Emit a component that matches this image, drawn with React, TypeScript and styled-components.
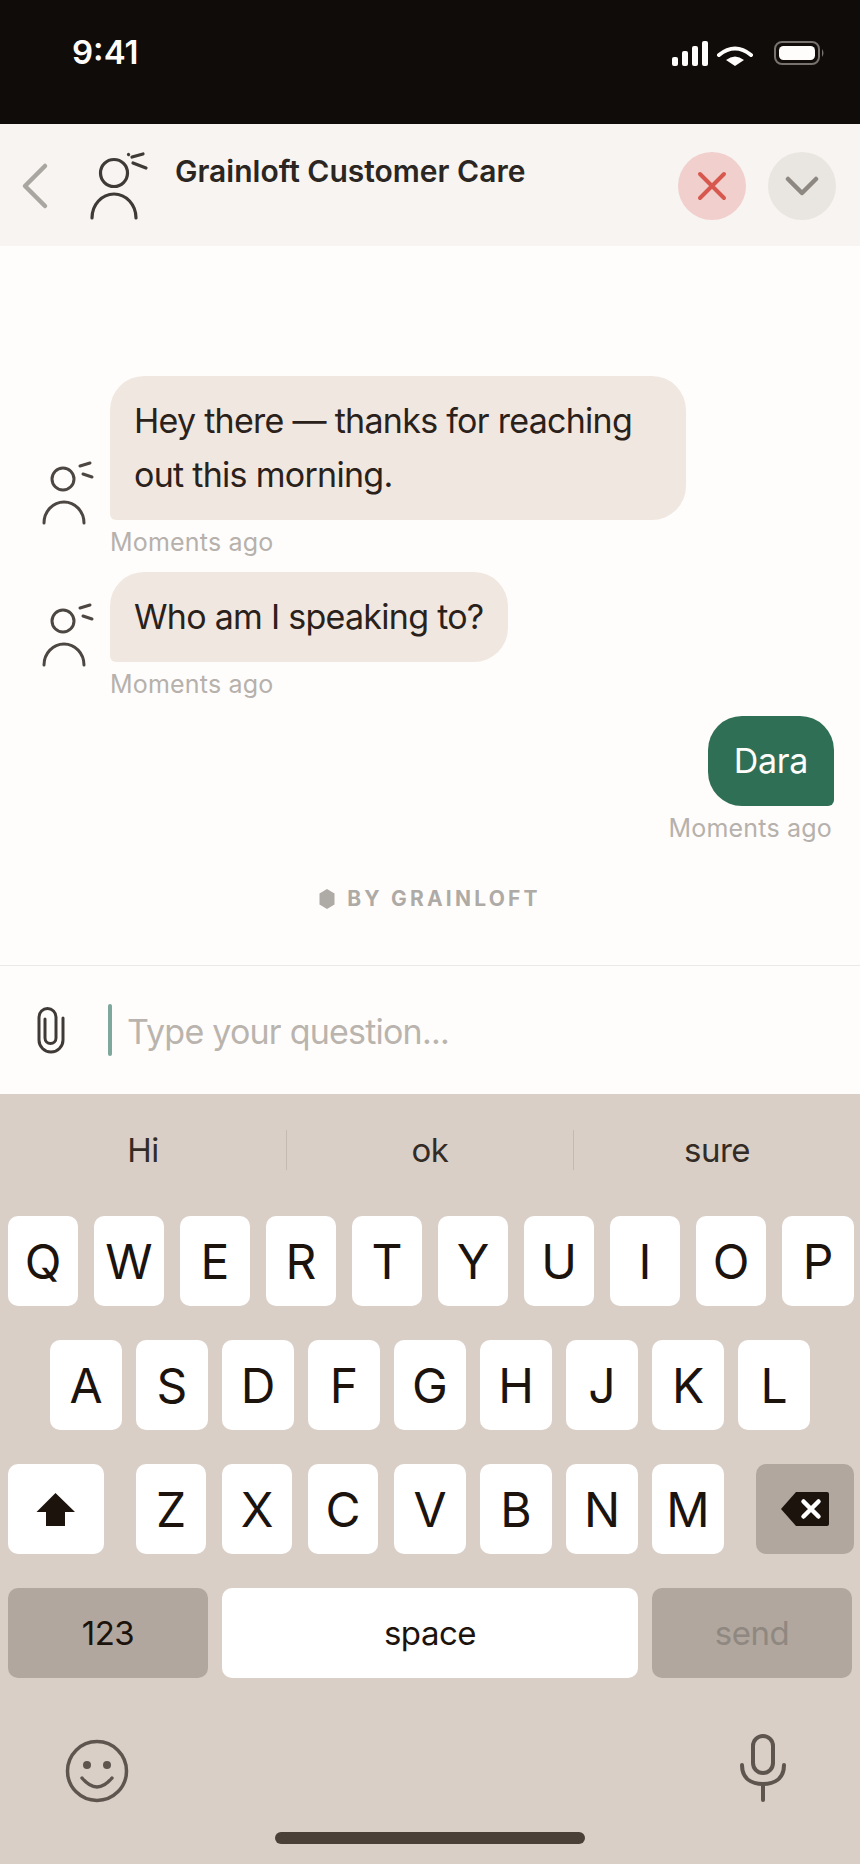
import React from "react";
import styled, { createGlobalStyle } from "styled-components";

const Global = createGlobalStyle`
  html, body { margin: 0; padding: 0; background: #fffdfb; }
  * { box-sizing: border-box; }
`;

const FONT = `Inter, "Liberation Sans", sans-serif`;

const Phone = styled.div`
  width: 860px; height: 1864px; display: flex; flex-direction: column; overflow: hidden;
  font-family: ${FONT}; background: #fffdfb;
`;

const StatusBar = styled.div`
  height: 124px; flex: none; background: #100c09; color: #fffdfb;
  display: flex; align-items: flex-start; justify-content: space-between;
  padding: 32px 34px 0 72px;
`;
const Clock = styled.div`font-size: 33px; font-weight: 600; line-height: 40px;`;
const StatusIcons = styled.svg`width: 156px; height: 30px; display: block; margin-top: 9px;`;

const Header = styled.header`
  height: 122px; flex: none; background: #f7f4f1; display: flex; align-items: flex-start;
  padding: 28px 24px 0 21px;
`;
const BackIcon = styled.svg`width: 28px; height: 48px; margin-top: 10px; flex: none; display: block;`;
const BigAvatar = styled.svg`width: 60px; height: 72px; margin: -3px 0 0 41px; flex: none; display: block;`;
const Title = styled.h1`
  flex: 1; margin: -1px 0 0 25px; font-size: 30px; line-height: 40px; font-weight: 600; color: #2b2622;
`;
const RoundButton = styled.div<{ $bg: string }>`
  width: 68px; height: 68px; border-radius: 50%; background: ${(p) => p.$bg};
  display: flex; align-items: center; justify-content: center; margin-left: 22px; flex: none;
`;

const Thread = styled.main`
  flex: 1; display: flex; flex-direction: column; padding-top: 130px;
`;
const Group = styled.section<{ $after: number }>`
  display: flex; flex-direction: column; margin-bottom: ${(p) => p.$after}px;
`;
const Row = styled.div<{ $mine?: boolean }>`
  display: flex; align-items: flex-end; padding: ${(p) => (p.$mine ? "0 26px 0 0" : "0 0 0 41px")};
  justify-content: ${(p) => (p.$mine ? "flex-end" : "flex-start")};
`;
const SmallAvatar = styled.svg`width: 54px; height: 66px; margin: 0 15px -6px 0; flex: none; display: block;`;
const Bubble = styled.div<{ $mine?: boolean }>`
  font-size: 34px; line-height: 54px; font-weight: 400; max-width: 576px;
  padding: ${(p) => (p.$mine ? "18px 26px" : "18px 24px")};
  letter-spacing: ${(p) => (p.$mine ? "-0.3px" : "-0.72px")};
  color: ${(p) => (p.$mine ? "#fffdfb" : "#2a211b")};
  background: ${(p) => (p.$mine ? "#2f6f56" : "#f0e7e0")};
  border-radius: ${(p) => (p.$mine ? "34px 34px 6px 34px" : "34px 34px 34px 6px")};
`;
const Meta = styled.div<{ $mine?: boolean }>`
  font-size: 25px; line-height: 33px; margin-top: 6px; color: #b6b1ac; letter-spacing: 0.2px;
  padding: ${(p) => (p.$mine ? "0 28px 0 0" : "0 0 0 110px")};
  text-align: ${(p) => (p.$mine ? "right" : "left")};
`;
const Brand = styled.div`
  display: flex; align-items: center; justify-content: center; gap: 12px; margin-top: 5px;
  font-size: 21px; line-height: 24px; font-weight: 700; letter-spacing: 3.2px; color: #aeaaa6;
`;
const Hex = styled.svg`width: 16px; height: 20px; display: block; flex: none;`;

const Composer = styled.div`
  height: 129px; flex: none; border-top: 1px solid #ebe8e5; display: flex; align-items: center;
  padding: 0 0 0 36px;
`;
const Clip = styled.svg`width: 32px; height: 52px; flex: none; display: block;`;
const Caret = styled.div`width: 4px; height: 52px; border-radius: 2px; background: #7ea89b; margin-left: 40px; flex: none;`;
const Placeholder = styled.div`font-size: 34px; line-height: 44px; color: #bab4ae; margin: 4px 0 0 15px; letter-spacing: -0.78px;`;

const Keyboard = styled.div`
  height: 770px; flex: none; background: #d9cfc7; display: flex; flex-direction: column;
`;
const Suggestions = styled.div`height: 112px; flex: none; display: flex; align-items: center; margin-bottom: 10px;`;
const Suggestion = styled.div`flex: 1; text-align: center; font-size: 33px; line-height: 40px; color: #332b25; letter-spacing: -0.5px;`;
const SuggestDivider = styled.div`width: 1px; height: 40px; background: #c4bab1; flex: none;`;

const KeyRow = styled.div<{ $cols: string; $pad?: number }>`
  display: grid; flex: none; grid-template-columns: ${(p) => p.$cols}; height: 90px; margin-bottom: 34px;
  padding-left: ${(p) => p.$pad ?? 8}px;
`;
const Key = styled.div<{ $w?: number; $tone?: "white" | "dark"; $size?: number; $muted?: boolean }>`
  width: ${(p) => p.$w ?? 70}px; height: 90px; border-radius: 10px;
  background: ${(p) => (p.$tone === "dark" ? "#b1a79e" : "#ffffff")};
  color: ${(p) => (p.$muted ? "#8f8881" : "#1c130d")};
  font-size: ${(p) => p.$size ?? 48}px; line-height: 1; letter-spacing: ${(p) => (p.$size ? "-0.5px" : "0")};
  padding-top: ${(p) => (p.$size ? "0" : "2px")};
  display: flex; align-items: center; justify-content: center;
`;
const ToolRow = styled.div`
  display: flex; align-items: flex-start; justify-content: space-between; flex: none;
  padding: 21px 71px 0 62px; height: 91px;
`;
const Smile = styled.svg`width: 70px; height: 70px; display: block; margin-top: 3px;`;
const Mic = styled.svg`width: 52px; height: 73px; display: block;`;
const HomeBar = styled.div`width: 310px; height: 12px; flex: none; border-radius: 6px; background: #4a4038; margin: 29px auto 0;`;

const row1 = "QWERTYUIOP".split("");
const row2 = "ASDFGHJKL".split("");
const row3: [string, number][] = [["Z", 70], ["X", 70], ["C", 70], ["V", 72], ["B", 72], ["N", 72], ["M", 72]];

function AvatarGlyph() {
  return (
    <g fill="none" stroke="#4c4742" strokeWidth="3" strokeLinecap="round">
      <circle cx="22" cy="19" r="11" />
      <path d="M3 63 A20 21 0 0 1 43 63" />
      <path d="M39 6 L49 3" />
      <path d="M42 14 L51 17" />
    </g>
  );
}

export default function App() {
  return (
    <Phone>
      <Global />
      <StatusBar>
        <Clock>9:41</Clock>
        <StatusIcons viewBox="0 0 156 30">
          <g fill="#fffdfb">
            <rect x="2" y="16" width="6" height="9" rx="2" />
            <rect x="12" y="10" width="6" height="15" rx="2" />
            <rect x="22" y="5" width="6" height="20" rx="2" />
            <rect x="32" y="0" width="6" height="25" rx="2" />
            <path d="M56 19 Q65 12 74 19 L65 25 Z" />
          </g>
          <path d="M49 14 Q65 1 81 14" fill="none" stroke="#fffdfb" strokeWidth="4" strokeLinecap="round" />
          <rect x="105" y="1" width="44" height="22" rx="7" fill="none" stroke="#77726d" strokeWidth="2" />
          <rect x="109" y="5" width="36" height="14" rx="4.5" fill="#fffdfb" />
          <path d="M152 8 Q155 12 152 16 Z" fill="#77726d" />
        </StatusIcons>
      </StatusBar>

      <Header>
        <BackIcon viewBox="0 0 28 48">
          <path d="M24 4 L4 24 L24 44" fill="none" stroke="#a9a5a0" strokeWidth="4.5" strokeLinecap="round" strokeLinejoin="round" />
        </BackIcon>
        <BigAvatar viewBox="0 0 60 72">
          <g fill="none" stroke="#3f3a36" strokeWidth="3.2" strokeLinecap="round">
            <circle cx="24" cy="24" r="13.5" />
            <path d="M2 69 A22 24 0 0 1 46 69" />
            <path d="M42 8 L53 5" />
            <path d="M43 14 L56 19" />
            <path d="M38.5 5.5 L38.6 5.6" />
          </g>
        </BigAvatar>
        <Title>Grainloft Customer Care</Title>
        <RoundButton $bg="#f1cfcd">
          <svg width="30" height="30" viewBox="0 0 30 30">
            <path d="M3 3 L27 27 M27 3 L3 27" stroke="#d6584e" strokeWidth="4" strokeLinecap="round" />
          </svg>
        </RoundButton>
        <RoundButton $bg="#e9e5e0">
          <svg width="34" height="20" viewBox="0 0 34 20">
            <path d="M3 3 L17 17 L31 3" fill="none" stroke="#8e8882" strokeWidth="4.5" strokeLinecap="round" strokeLinejoin="round" />
          </svg>
        </RoundButton>
      </Header>

      <Thread>
        <Group $after={13}>
          <Row>
            <SmallAvatar viewBox="0 0 54 66"><AvatarGlyph /></SmallAvatar>
            <Bubble>Hey there — thanks for reaching out this morning.</Bubble>
          </Row>
          <Meta>Moments ago</Meta>
        </Group>
        <Group $after={15}>
          <Row>
            <SmallAvatar viewBox="0 0 54 66"><AvatarGlyph /></SmallAvatar>
            <Bubble>Who am I speaking to?</Bubble>
          </Row>
          <Meta>Moments ago</Meta>
        </Group>
        <Group $after={37}>
          <Row $mine>
            <Bubble $mine>Dara</Bubble>
          </Row>
          <Meta $mine>Moments ago</Meta>
        </Group>
        <Brand>
          <Hex viewBox="0 0 16 20"><path d="M8 0 L15.5 4.5 V15.5 L8 20 L0.5 15.5 V4.5 Z" fill="#aeaaa6" /></Hex>
          BY GRAINLOFT
        </Brand>
      </Thread>

      <Composer>
        <Clip viewBox="0 0 32 52">
          <path d="M27 14 V36 A12 12 0 0 1 3 36 V13 A8.5 8.5 0 0 1 20 13 V34 A5.5 5.5 0 0 1 9 34 V15" fill="none" stroke="#3f3a36" strokeWidth="3" strokeLinecap="round" />
        </Clip>
        <Caret />
        <Placeholder>Type your question...</Placeholder>
      </Composer>

      <Keyboard>
        <Suggestions>
          <Suggestion>Hi</Suggestion>
          <SuggestDivider />
          <Suggestion>ok</Suggestion>
          <SuggestDivider />
          <Suggestion>sure</Suggestion>
        </Suggestions>
        <KeyRow $cols="repeat(10, 86px)">
          {row1.map((k) => <Key key={k} $w={k === "P" ? 72 : 70}>{k}</Key>)}
        </KeyRow>
        <KeyRow $cols="repeat(9, 86px)" $pad={50}>
          {row2.map((k) => <Key key={k} $w={72}>{k}</Key>)}
        </KeyRow>
        <KeyRow $cols="128px repeat(6, 86px) 104px 98px">
          <Key $w={96}>
            <svg width="40" height="36" viewBox="0 0 40 36">
              <path d="M19.5 1 L39 20 H29 V34 H10 V20 H0.5 Z" fill="#1c130d" />
            </svg>
          </Key>
          {row3.map(([k, w]) => <Key key={k} $w={w}>{k}</Key>)}
          <Key $w={98} $tone="dark" $size={48}>
            <svg width="50" height="36" viewBox="0 0 50 36">
              <path d="M16 1 H47 A2 2 0 0 1 49 3 V33 A2 2 0 0 1 47 35 H16 L1 18 Z" fill="#1c130d" />
              <path d="M23.5 10.5 L38.5 25.5 M38.5 10.5 L23.5 25.5" stroke="#fff" strokeWidth="4.5" strokeLinecap="round" />
            </svg>
          </Key>
        </KeyRow>
        <KeyRow $cols="214px 430px 200px">
          <Key $w={200} $tone="dark" $size={33}>123</Key>
          <Key $w={416} $size={33}>space</Key>
          <Key $w={200} $tone="dark" $size={33} $muted>send</Key>
        </KeyRow>
        <ToolRow>
          <Smile viewBox="0 0 70 70">
            <circle cx="35" cy="35" r="29.5" fill="none" stroke="#5e554e" strokeWidth="3.5" />
            <circle cx="25" cy="29" r="4" fill="#5e554e" />
            <circle cx="45" cy="29" r="4" fill="#5e554e" />
            <path d="M20 42 Q35 60 50 42" fill="none" stroke="#5e554e" strokeWidth="3.5" strokeLinecap="round" />
          </Smile>
          <Mic viewBox="0 0 52 73">
            <g fill="none" stroke="#5e554e" strokeWidth="4" strokeLinecap="round">
              <rect x="16" y="3" width="20" height="37" rx="10" />
              <path d="M5 32 C5 46 15 51 26 51 C37 51 47 46 47 32" />
              <path d="M26 51 V67" />
            </g>
          </Mic>
        </ToolRow>
        <HomeBar />
      </Keyboard>
    </Phone>
  );
}
